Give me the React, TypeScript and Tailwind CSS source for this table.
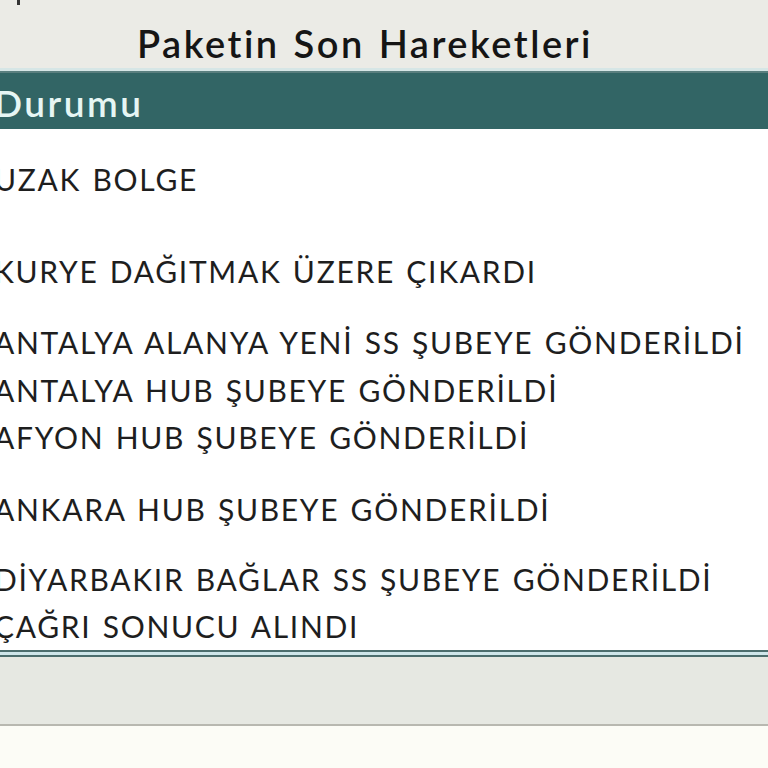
import React from "react";

const rows: { text: string; mt: string }[] = [
  { text: "UZAK BOLGE", mt: "mt-[26px]" },
  { text: "KURYE DAĞITMAK ÜZERE ÇIKARDI", mt: "mt-[44px]" },
  { text: "ANTALYA ALANYA YENİ SS ŞUBEYE GÖNDERİLDİ", mt: "mt-[23px]" },
  { text: "ANTALYA HUB ŞUBEYE GÖNDERİLDİ", mt: "mt-0" },
  { text: "AFYON HUB ŞUBEYE GÖNDERİLDİ", mt: "mt-0" },
  { text: "ANKARA HUB ŞUBEYE GÖNDERİLDİ", mt: "mt-[24px]" },
  { text: "DİYARBAKIR BAĞLAR SS ŞUBEYE GÖNDERİLDİ", mt: "mt-[22px]" },
  { text: "ÇAĞRI SONUCU ALINDI", mt: "mt-[-1px]" },
];

export default function App() {
  return (
    <div
      className="w-[768px] h-[768px] overflow-hidden bg-[#fcfcf6] flex flex-col"
      style={{ fontFamily: "Lato, 'Open Sans', sans-serif" }}
    >
      <div className="h-[68px] bg-[#ebebe6] relative flex items-center justify-center shrink-0">
        <div className="absolute left-[17px] top-0 w-[3px] h-[5px] bg-[#333]" />
        <span className="text-[38px] font-semibold text-[#151515] mt-[18px] leading-none tracking-[2.5px] [word-spacing:2px] ml-[-38px]">
          Paketin Son Hareketleri
        </span>
      </div>
      <div className="h-[3px] bg-[#d6e6e6] shrink-0" />
      <div className="h-[58px] bg-[#326565] border-t-[2px] border-[#5a7f7f] flex items-center shrink-0">
        <span className="text-[37px] font-semibold text-[#e6f6f4] ml-[-6px] leading-none mt-[2px] tracking-[2.5px]">
          Durumu
        </span>
      </div>
      <div className="bg-white flex flex-col h-[521px] shrink-0">
        {rows.map((r, i) => (
          <div
            key={i}
            className={`${r.mt} h-[48px] flex items-center ml-[-6px] text-[30px] text-[#1e1e1e] whitespace-nowrap leading-none tracking-[1.7px] [word-spacing:2px]`}
          >
            {r.text}
          </div>
        ))}
      </div>
      <div className="h-[2px] bg-[#4d6e6e] shrink-0" />
      <div className="h-[3px] bg-[#cfe6ea] shrink-0" />
      <div className="h-[2px] bg-[#4d6e6e] shrink-0" />
      <div className="h-[67px] bg-[#e6e8e2] shrink-0" />
      <div className="h-[2px] bg-[#b8b8b0] shrink-0" />
      <div className="flex-1 bg-[#fcfcf6]" />
    </div>
  );
}
